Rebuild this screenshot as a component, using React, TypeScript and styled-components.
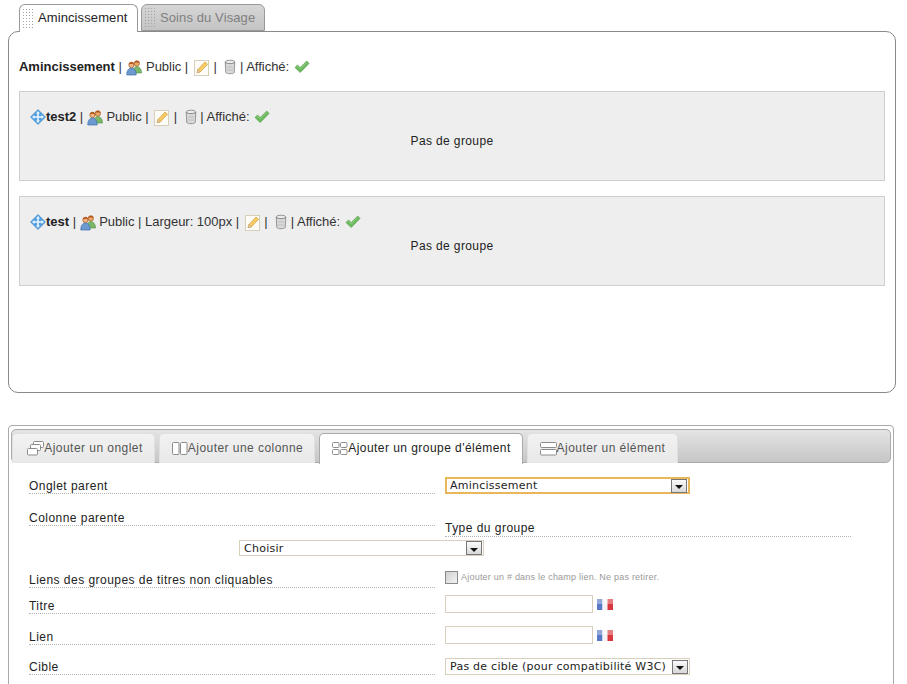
import React from "react";
import styled, { createGlobalStyle } from "styled-components";

const Global = createGlobalStyle`
  html, body { margin: 0; padding: 0; background: #fff; overflow: hidden; }
  body { font-family: "Liberation Sans", Arial, sans-serif; font-size: 12px; color: #222; }
`;

const Page = styled.div`
  width: 907px;
  height: 684px;
  overflow: hidden;
  padding-top: 4px;
  box-sizing: border-box;
`;

const TopTabs = styled.div`
  display: flex;
  gap: 3px;
  margin-left: 19px;
  height: 27px;
  position: relative;
  z-index: 1;
`;

const TopTab = styled.div<{ $active?: boolean; $width: number }>`
  box-sizing: border-box;
  width: ${(p) => p.$width}px;
  height: ${(p) => (p.$active ? 28 : 27)}px;
  display: flex;
  align-items: center;
  gap: 5px;
  padding: 0 0 ${(p) => (p.$active ? 2 : 1)}px 2px;
  border: 1px solid #999;
  border-bottom: ${(p) => (p.$active ? "none" : "1px solid #999")};
  border-radius: 6px 6px 0 0;
  font-size: 13px;
  letter-spacing: 0.1px;
  background: ${(p) => (p.$active ? "#fff" : "linear-gradient(#d6d6d6, #c4c4c4)")};
  color: ${(p) => (p.$active ? "#222" : "#808080")};
`;

const Grip = styled.span`
  width: 11px;
  height: 20px;
  flex: none;
  background-image: radial-gradient(circle, #a2a2a2 0.8px, transparent 1px);
  background-size: 3px 3px;
`;

const MainPanel = styled.div`
  box-sizing: border-box;
  margin: 0 11px 0 8px;
  height: 362px;
  border: 1px solid #8a8a8a;
  border-radius: 10px;
  padding: 20px 10px 0;
`;

const Line = styled.div`
  display: flex;
  align-items: center;
  height: 28px;
  font-size: 13px;
  line-height: 15px;
  white-space: pre;
  color: #333;
  letter-spacing: -0.02px;
  b { color: #222; }
  svg { flex: none; position: relative; top: 1px; }
`;

const GroupBox = styled.div<{ $top: number }>`
  box-sizing: border-box;
  height: 90px;
  margin-top: ${(p) => p.$top}px;
  background: #eeeeee;
  border: 1px solid #cfcfcf;
  padding: 10px 10px 0;
`;

const EmptyNote = styled.div`
  text-align: center;
  font-size: 12px;
  line-height: 14px;
  margin-top: 4px;
  color: #222;
  letter-spacing: 0.38px;
`;

const IconGap = styled.span<{ $w: number }>`
  width: ${(p) => p.$w}px;
  flex: none;
`;

const FormPanel = styled.div`
  box-sizing: border-box;
  margin: 32px 13px 0 8px;
  height: 300px;
  border: 1px solid #aaa;
  border-radius: 4px;
  padding: 3px 2px 0;
`;

const TabBar = styled.div`
  box-sizing: border-box;
  height: 34px;
  display: flex;
  gap: 4px;
  padding: 3px 0 0 0;
  border: 1px solid #aaa;
  border-radius: 5px;
  background: linear-gradient(#e4e4e4, #c6c6c6);
`;

const BarTab = styled.div<{ $active?: boolean; $width: number; $inset?: number }>`
  box-sizing: border-box;
  width: ${(p) => p.$width}px;
  height: ${(p) => (p.$active ? 31 : 30)}px;
  display: flex;
  align-items: center;
  justify-content: center;
  padding: 0 0 2px ${(p) => p.$inset || 0}px;
  border: 1px solid ${(p) => (p.$active ? "#aaa" : "#e0e0e0")};
  border-bottom: none;
  border-radius: 5px 5px 0 0;
  background: ${(p) => (p.$active ? "#fff" : "linear-gradient(#f2f2f2, #e8e8e8)")};
  font-size: 12px;
  letter-spacing: 0.45px;
  color: ${(p) => (p.$active ? "#222" : "#555")};
  position: relative;
  z-index: 1;
`;

const Form = styled.div`
  padding-left: 18px;
`;

const Row = styled.div<{ $top: number; $align?: string }>`
  display: grid;
  grid-template-columns: 406px 245px;
  column-gap: 10px;
  margin-top: ${(p) => p.$top}px;
  align-items: ${(p) => p.$align || "end"};
`;

const Label = styled.div`
  height: 17px;
  line-height: 20px;
  border-bottom: 1px dotted #b5b5b5;
  font-size: 12px;
  letter-spacing: 0.47px;
  color: #222;
`;

const TypeLabel = styled(Label)`
  width: 406px;
  height: 16px;
  line-height: 17px;
  margin-top: 12px;
`;

const Select = styled.div<{ $h: number }>`
  box-sizing: border-box;
  width: 245px;
  height: ${(p) => p.$h}px;
  display: flex;
  align-items: center;
  justify-content: space-between;
  padding: 0 1px 0 4px;
  border: 1px solid #d8d0bc;
  background: #fff;
  font-family: "DejaVu Sans", Verdana, sans-serif;
  font-size: 11px;
  letter-spacing: 0.25px;
  color: #222;
  white-space: nowrap;
`;

const FocusSelect = styled(Select)`
  border: 2px solid #eab65c;
  padding: 0 1px 0 3px;
`;

const SelectArrow = styled.span`
  box-sizing: border-box;
  flex: none;
  width: 16px;
  height: 14px;
  border: 1px solid #777;
  background: linear-gradient(#fafafa, #d8d8d8);
  display: flex;
  align-items: center;
  justify-content: center;
  &::after {
    content: "";
    margin-top: 3px;
    border-style: solid;
    border-width: 4px 4px 0;
    border-color: #111 transparent transparent;
  }
`;

const CentredSelect = styled(Select)`
  margin: 3px 0 0 210px;
`;

const CheckField = styled.div`
  display: flex;
  align-items: center;
  gap: 3px;
  height: 14px;
  font-size: 9px;
  letter-spacing: 0.22px;
  color: #999;
`;

const CheckBox = styled.span`
  box-sizing: border-box;
  width: 13px;
  height: 13px;
  border: 1px solid #8a8a8a;
  background: linear-gradient(135deg, #d0d0d0, #f2f2f2);
`;

const InputField = styled.div`
  display: flex;
  align-items: center;
  gap: 4px;
  margin-bottom: 1px;
`;

const TextInput = styled.div`
  box-sizing: border-box;
  width: 148px;
  height: 18px;
  border: 1px solid #d8d0bc;
  background: #fff;
`;

const Pipe = " | ";

const Users = () => (
  <svg width="16" height="17" viewBox="0 0 17 17" preserveAspectRatio="none">
    <circle cx="11.500" cy="4.500" r="2.800" fill="#e8a868" stroke="#a4561e" strokeWidth=".7" />
    <path d="M8.800 3.800C9.500 1 14 1 14.300 4c-2-.6-3.600-.6-5.500-.2z" fill="#b4551c" />
    <path d="M7.500 14c0-4.500 2-6.500 4-6.500s5 2 5 6.500z" fill="#7ab868" stroke="#4c8a48" strokeWidth=".6" />
    <circle cx="5.800" cy="6" r="2.800" fill="#f0b480" stroke="#a0521e" strokeWidth=".7" />
    <path d="M3 5.200C3.600 2.400 8 2.400 8.600 5.200 7 4.500 5 4.500 3 5.200z" fill="#b4551c" />
    <path d="M.8 16c0-5 2.400-7 5-7s5 2 5 7z" fill="#6c9ad0" stroke="#3b6ca6" strokeWidth=".7" />
  </svg>
);

const Edit = () => (
  <svg width="16" height="17" viewBox="0 0 16 17">
    <rect x=".5" y="1.500" width="14" height="15" fill="#fdfcf6" stroke="#d6cfbc" />
    <path d="M3 13.500l1-3 7-7.500 2.500 2.300L6.200 13z" fill="#f6cc64" stroke="#d49a3a" strokeWidth=".7" />
    <path d="M3 13.500l1-3 2.200 2.500z" fill="#f6e2c0" stroke="#b08a58" strokeWidth=".5" />
  </svg>
);

const Trash = () => (
  <svg width="12" height="16" viewBox="0 0 12 16">
    <ellipse cx="6" cy="3" rx="4.800" ry="1.800" fill="#ececec" stroke="#808080" strokeWidth=".8" />
    <path d="M1.200 3l.6 10.500c.6 1.600 7.800 1.600 8.400 0L10.800 3c-1 2.200-8.600 2.200-9.600 0z" fill="#dadada" stroke="#808080" strokeWidth=".8" />
    <path d="M3 8h6M3 11h6" stroke="#b8b8b8" strokeWidth=".8" />
  </svg>
);

const Check = () => (
  <svg width="16" height="14" viewBox="0 0 16 14">
    <path d="M1 7.500l2.500-2.500 2.700 2.600L12.800 1 15 3.500 6.200 12.500z" fill="#68b85c" stroke="#5aa050" strokeWidth=".7" />
    <path d="M2.500 7.300l1-1 2.700 2.600 6.600-6.300" fill="none" stroke="#a5dc92" strokeWidth=".7" />
  </svg>
);

const Move = () => (
  <svg width="16" height="16" viewBox="0 0 16 16">
    <path d="M8 .500L15.500 8 8 15.500.5 8z" fill="#4f9fe0" stroke="#3d82c4" strokeWidth=".6" />
    <path d="M8 2L10 4.500H8.800V7.200H11.500V6L14 8l-2.500 2V8.800H8.800v2.700H10L8 14l-2-2.500h1.200V8.800H4.500V10L2 8l2.500-2v1.200h2.700V4.500H6z" fill="#eaf5ff" />
  </svg>
);

const Flag = () => (
  <svg width="16" height="11" viewBox="0 0 16 11">
    <rect width="5.500" height="11" fill="#5a78c8" />
    <rect x="5.500" width="5" height="11" fill="#f4f4f8" />
    <rect x="10.500" width="5.500" height="11" fill="#d8383c" />
    <rect width="16" height="5" fill="#fff" opacity=".35" />
  </svg>
);

const TabIcon = ({ kind }: { kind: string }) => (
  <svg width="17" height="16" viewBox="0 0 17 16" fill="#fff" stroke="#8c8c8c" strokeWidth="1">
    {kind === "tab" && (
      <>
        <rect x="6.500" y="1.500" width="10" height="6" rx="1" />
        <rect x="3.500" y="4.500" width="10" height="6" rx="1" />
        <rect x=".5" y="8.500" width="10" height="6.500" rx="1" />
      </>
    )}
    {kind === "col" && (
      <>
        <rect x="1.500" y="2.500" width="6.500" height="12" rx="1" />
        <rect x="9.500" y="2.500" width="6.500" height="12" rx="1" />
      </>
    )}
    {kind === "group" && (
      <>
        <rect x="1.500" y="2.500" width="6.500" height="5" rx="1" />
        <rect x="9.500" y="2.500" width="6.500" height="5" rx="1" />
        <rect x="1.500" y="9.500" width="6.500" height="5" rx="1" />
        <rect x="9.500" y="9.500" width="6.500" height="5" rx="1" />
      </>
    )}
    {kind === "el" && (
      <>
        <rect x=".5" y="2.500" width="16" height="5" rx="1" />
        <rect x=".5" y="9.500" width="16" height="5.500" rx="1" />
      </>
    )}
  </svg>
);

const Tail = () => (
  <>
    <IconGap $w={2} /><Edit />{Pipe}<IconGap $w={4} /> <Trash />{" | Affiché: "}<IconGap $w={1} /><Check />
  </>
);

export default function App() {
  return (
    <Page>
      <Global />
      <TopTabs>
        <TopTab $active $width={119}><Grip />Amincissement</TopTab>
        <TopTab $width={124}><Grip />Soins du Visage</TopTab>
      </TopTabs>
      <MainPanel>
        <Line>
          <b>Amincissement</b>{Pipe}<IconGap $w={1} /><Users />{" Public" + Pipe}<Tail />
        </Line>
        <GroupBox $top={11}>
          <Line>
            <Move /><b>test2</b>{Pipe}<Users />{" Public" + Pipe}<Tail />
          </Line>
          <EmptyNote>Pas de groupe</EmptyNote>
        </GroupBox>
        <GroupBox $top={15}>
          <Line>
            <Move /><b>test</b>{Pipe}<Users />{" Public | Largeur: 100px" + Pipe}<Tail />
          </Line>
          <EmptyNote>Pas de groupe</EmptyNote>
        </GroupBox>
      </MainPanel>
      <FormPanel>
        <TabBar>
          <BarTab $width={143} $inset={3}><TabIcon kind="tab" />Ajouter un onglet</BarTab>
          <BarTab $width={156}><TabIcon kind="col" />Ajouter une colonne</BarTab>
          <BarTab $active $width={204}><TabIcon kind="group" />Ajouter un groupe d'élément</BarTab>
          <BarTab $width={151}><TabIcon kind="el" />Ajouter un élément</BarTab>
        </TabBar>
        <Form>
          <Row $top={13}>
            <Label>Onglet parent</Label>
            <FocusSelect $h={17}>Amincissement<SelectArrow /></FocusSelect>
          </Row>
          <Row $top={14} $align="start">
            <Label>Colonne parente</Label>
            <TypeLabel>Type du groupe</TypeLabel>
          </Row>
          <CentredSelect $h={16}>Choisir<SelectArrow /></CentredSelect>
          <Row $top={14} $align="start">
            <Label>Liens des groupes de titres non cliquables</Label>
            <CheckField><CheckBox />Ajouter un # dans le champ lien. Ne pas retirer.</CheckField>
          </Row>
          <Row $top={7}>
            <Label>Titre</Label>
            <InputField><TextInput /><Flag /></InputField>
          </Row>
          <Row $top={12}>
            <Label>Lien</Label>
            <InputField><TextInput /><Flag /></InputField>
          </Row>
          <Row $top={12}>
            <Label>Cible</Label>
            <Select $h={17}>Pas de cible (pour compatibilité W3C)<SelectArrow /></Select>
          </Row>
        </Form>
      </FormPanel>
    </Page>
  );
}
